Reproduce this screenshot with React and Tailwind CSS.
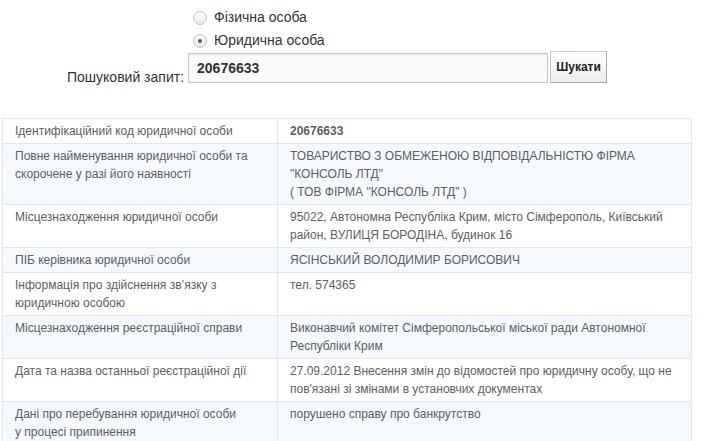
import React from 'react'

const rows = [
  ['Ідентифікаційний код юридичної особи', <b>20676633</b>],
  [
    'Повне найменування юридичної особи та скорочене у разі його наявності',
    <>
      ТОВАРИСТВО З ОБМЕЖЕНОЮ ВІДПОВІДАЛЬНІСТЮ ФІРМА
      <br />
      "КОНСОЛЬ ЛТД"
      <br />( ТОВ ФІРМА "КОНСОЛЬ ЛТД" )
    </>,
  ],
  [
    'Місцезнаходження юридичної особи',
    '95022, Автономна Республіка Крим, місто Сімферополь, Київський район, ВУЛИЦЯ БОРОДІНА, будинок 16',
  ],
  ['ПІБ керівника юридичної особи', 'ЯСІНСЬКИЙ ВОЛОДИМИР БОРИСОВИЧ'],
  [
    <>
      Інформація про здійснення зв’язку з
      <br />
      юридичною особою
    </>,
    'тел. 574365',
  ],
  [
    'Місцезнаходження реєстраційної справи',
    'Виконавчий комітет Сімферопольської міської ради Автономної Республіки Крим',
  ],
  [
    'Дата та назва останньої реєстраційної дії',
    "27.09.2012 Внесення змін до відомостей про юридичну особу, що не пов'язані зі змінами в установчих документах",
  ],
  [
    <>
      Дані про перебування юридичної особи
      <br />у процесі припинення
    </>,
    'порушено справу про банкрутство',
  ],
]

function Radio({ checked, label }) {
  return (
    <label className="flex items-center gap-[7px] h-[23px] text-[14px] text-[#333]">
      <span className="w-[14px] h-[14px] rounded-full border border-[#c4c4c4] bg-gradient-to-b from-[#fdfdfd] to-[#e6e6e6] flex items-center justify-center">
        {checked && <span className="w-[4px] h-[4px] rounded-full bg-[#555]" />}
      </span>
      {label}
    </label>
  )
}

export default function App() {
  return (
    <div className="w-[702px] h-[441px] overflow-hidden bg-white font-['Liberation_Sans',Arial,sans-serif] text-[#333]">
      <div className="pl-[193px] pt-[6px]">
        <Radio label="Фізична особа" />
        <Radio checked label="Юридична особа" />
      </div>

      <div className="flex items-end pl-[67px] mt-[-1px]">
        <span className="text-[14px] leading-[16px] mr-[4px] mb-[-2px]">Пошуковий запит:</span>
        <div className="w-[360px] h-[30px] border border-[#c8c8c8] bg-[#fafafa] flex items-center px-[8px] text-[14px] font-bold text-[#333] shadow-[inset_0_1px_2px_rgba(0,0,0,0.08)]">
          20676633
        </div>
        <button className="ml-[2px] w-[57px] h-[32px] border border-[#c8c8c8] border-b-[#aaa] border-r-[#aaa] bg-gradient-to-b from-white to-[#ededed] text-[12px] font-bold text-[#222]">
          Шукати
        </button>
      </div>

      <table className="ml-[2px] mt-[35px] w-[690px] border-collapse text-[12px] leading-[18px] text-[#5b6066]">
        <tbody>
          {rows.map(([k, v], i) => (
            <tr key={i} className={i % 2 === 1 ? 'bg-[#f5f9fd]' : 'bg-white'}>
              <td className="w-[275px] border border-[#dde8f2] px-[12px] pt-[3px] pb-[3px] align-top">{k}</td>
              <td className="border border-[#dde8f2] px-[12px] pt-[3px] pb-[3px] align-top">{v}</td>
            </tr>
          ))}
        </tbody>
      </table>
    </div>
  )
}
